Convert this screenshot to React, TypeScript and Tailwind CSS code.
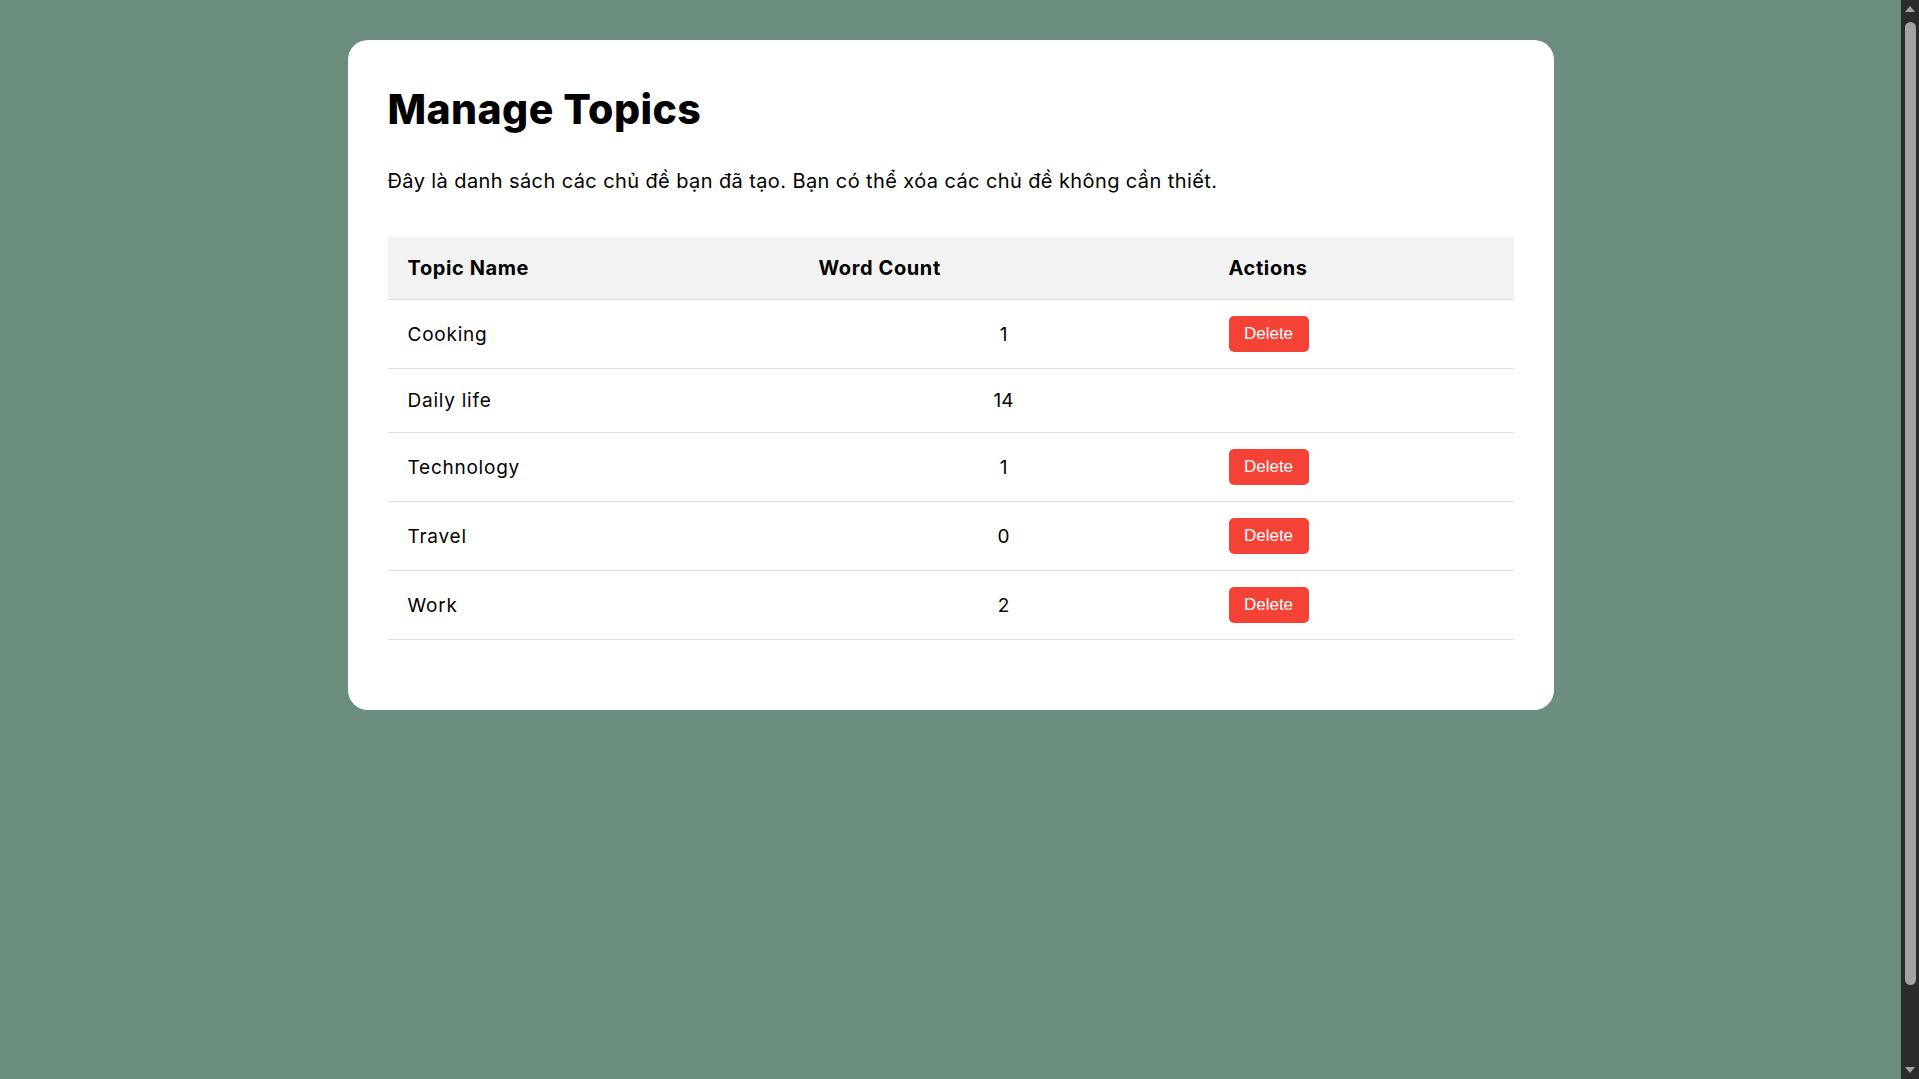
const topics = [
  { name: "Cooking", count: 1, deletable: true },
  { name: "Daily life", count: 14, deletable: false },
  { name: "Technology", count: 1, deletable: true },
  { name: "Travel", count: 0, deletable: true },
  { name: "Work", count: 2, deletable: true },
];

const Scrollbar = () => (
  <div className="flex h-full w-[18px] shrink-0 flex-col items-center bg-[#2b2b2b] pt-[5px] pb-[5px]">
    <svg width="12" height="8" viewBox="0 0 12 8">
      <path d="M6 1 L11 7 L1 7 Z" fill="#a3a3a3" />
    </svg>
    <div className="mt-[9px] h-[963px] w-[11px] rounded-full bg-[#a3a3a3]" />
    <svg className="mt-auto" width="12" height="8" viewBox="0 0 12 8">
      <path d="M1 1 L11 1 L6 7 Z" fill="#a3a3a3" />
    </svg>
  </div>
);

const App = () => {
  return (
    <div className="flex h-screen overflow-hidden bg-[#6b8e7f] font-['Inter',sans-serif] text-black">
      <main className="flex-1 pt-10">
        <div className="mx-auto w-[1206px] rounded-[20px] bg-white px-10 pt-10 pb-[70px]">
          <h1 className="mt-[3px] text-[41px] leading-[52px] font-extrabold tracking-[0.01em]">
            Manage Topics
          </h1>
          <p className="mt-8 text-[20px] leading-[28px] tracking-[0.02em]">
            Đây là danh sách các chủ đề bạn đã tạo. Bạn có thể xóa các chủ đề không cần thiết.
          </p>

          <table className="mt-[42px] w-full table-fixed border-collapse">
            <thead>
              <tr className="border-b border-[#dddddd] bg-[#f2f2f2]">
                <th className="w-[411px] px-5 py-[17px] text-left text-[20px] leading-[28px] font-bold tracking-[0.03em]">
                  Topic Name
                </th>
                <th className="w-[410px] px-5 py-[17px] text-left text-[20px] leading-[28px] font-bold tracking-[0.03em]">
                  Word Count
                </th>
                <th className="px-5 py-[17px] text-left text-[20px] leading-[28px] font-bold tracking-[0.03em]">
                  Actions
                </th>
              </tr>
            </thead>
            <tbody>
              {topics.map((t) => (
                <tr key={t.name} className="border-b border-[#dddddd]">
                  <td className="px-5 py-4 text-[19px] leading-[31px] tracking-[0.04em]">{t.name}</td>
                  <td className="px-5 py-4 text-center text-[19px] leading-[31px]">{t.count}</td>
                  <td className="px-5 py-4">
                    {t.deletable && (
                      <button className="flex h-9 w-20 items-center justify-center rounded-[5px] bg-[#f44336] font-['Liberation_Sans',Arial,sans-serif] text-[17px] text-white">
                        Delete
                      </button>
                    )}
                  </td>
                </tr>
              ))}
            </tbody>
          </table>
        </div>
      </main>
      <Scrollbar />
    </div>
  );
};

export default App;
